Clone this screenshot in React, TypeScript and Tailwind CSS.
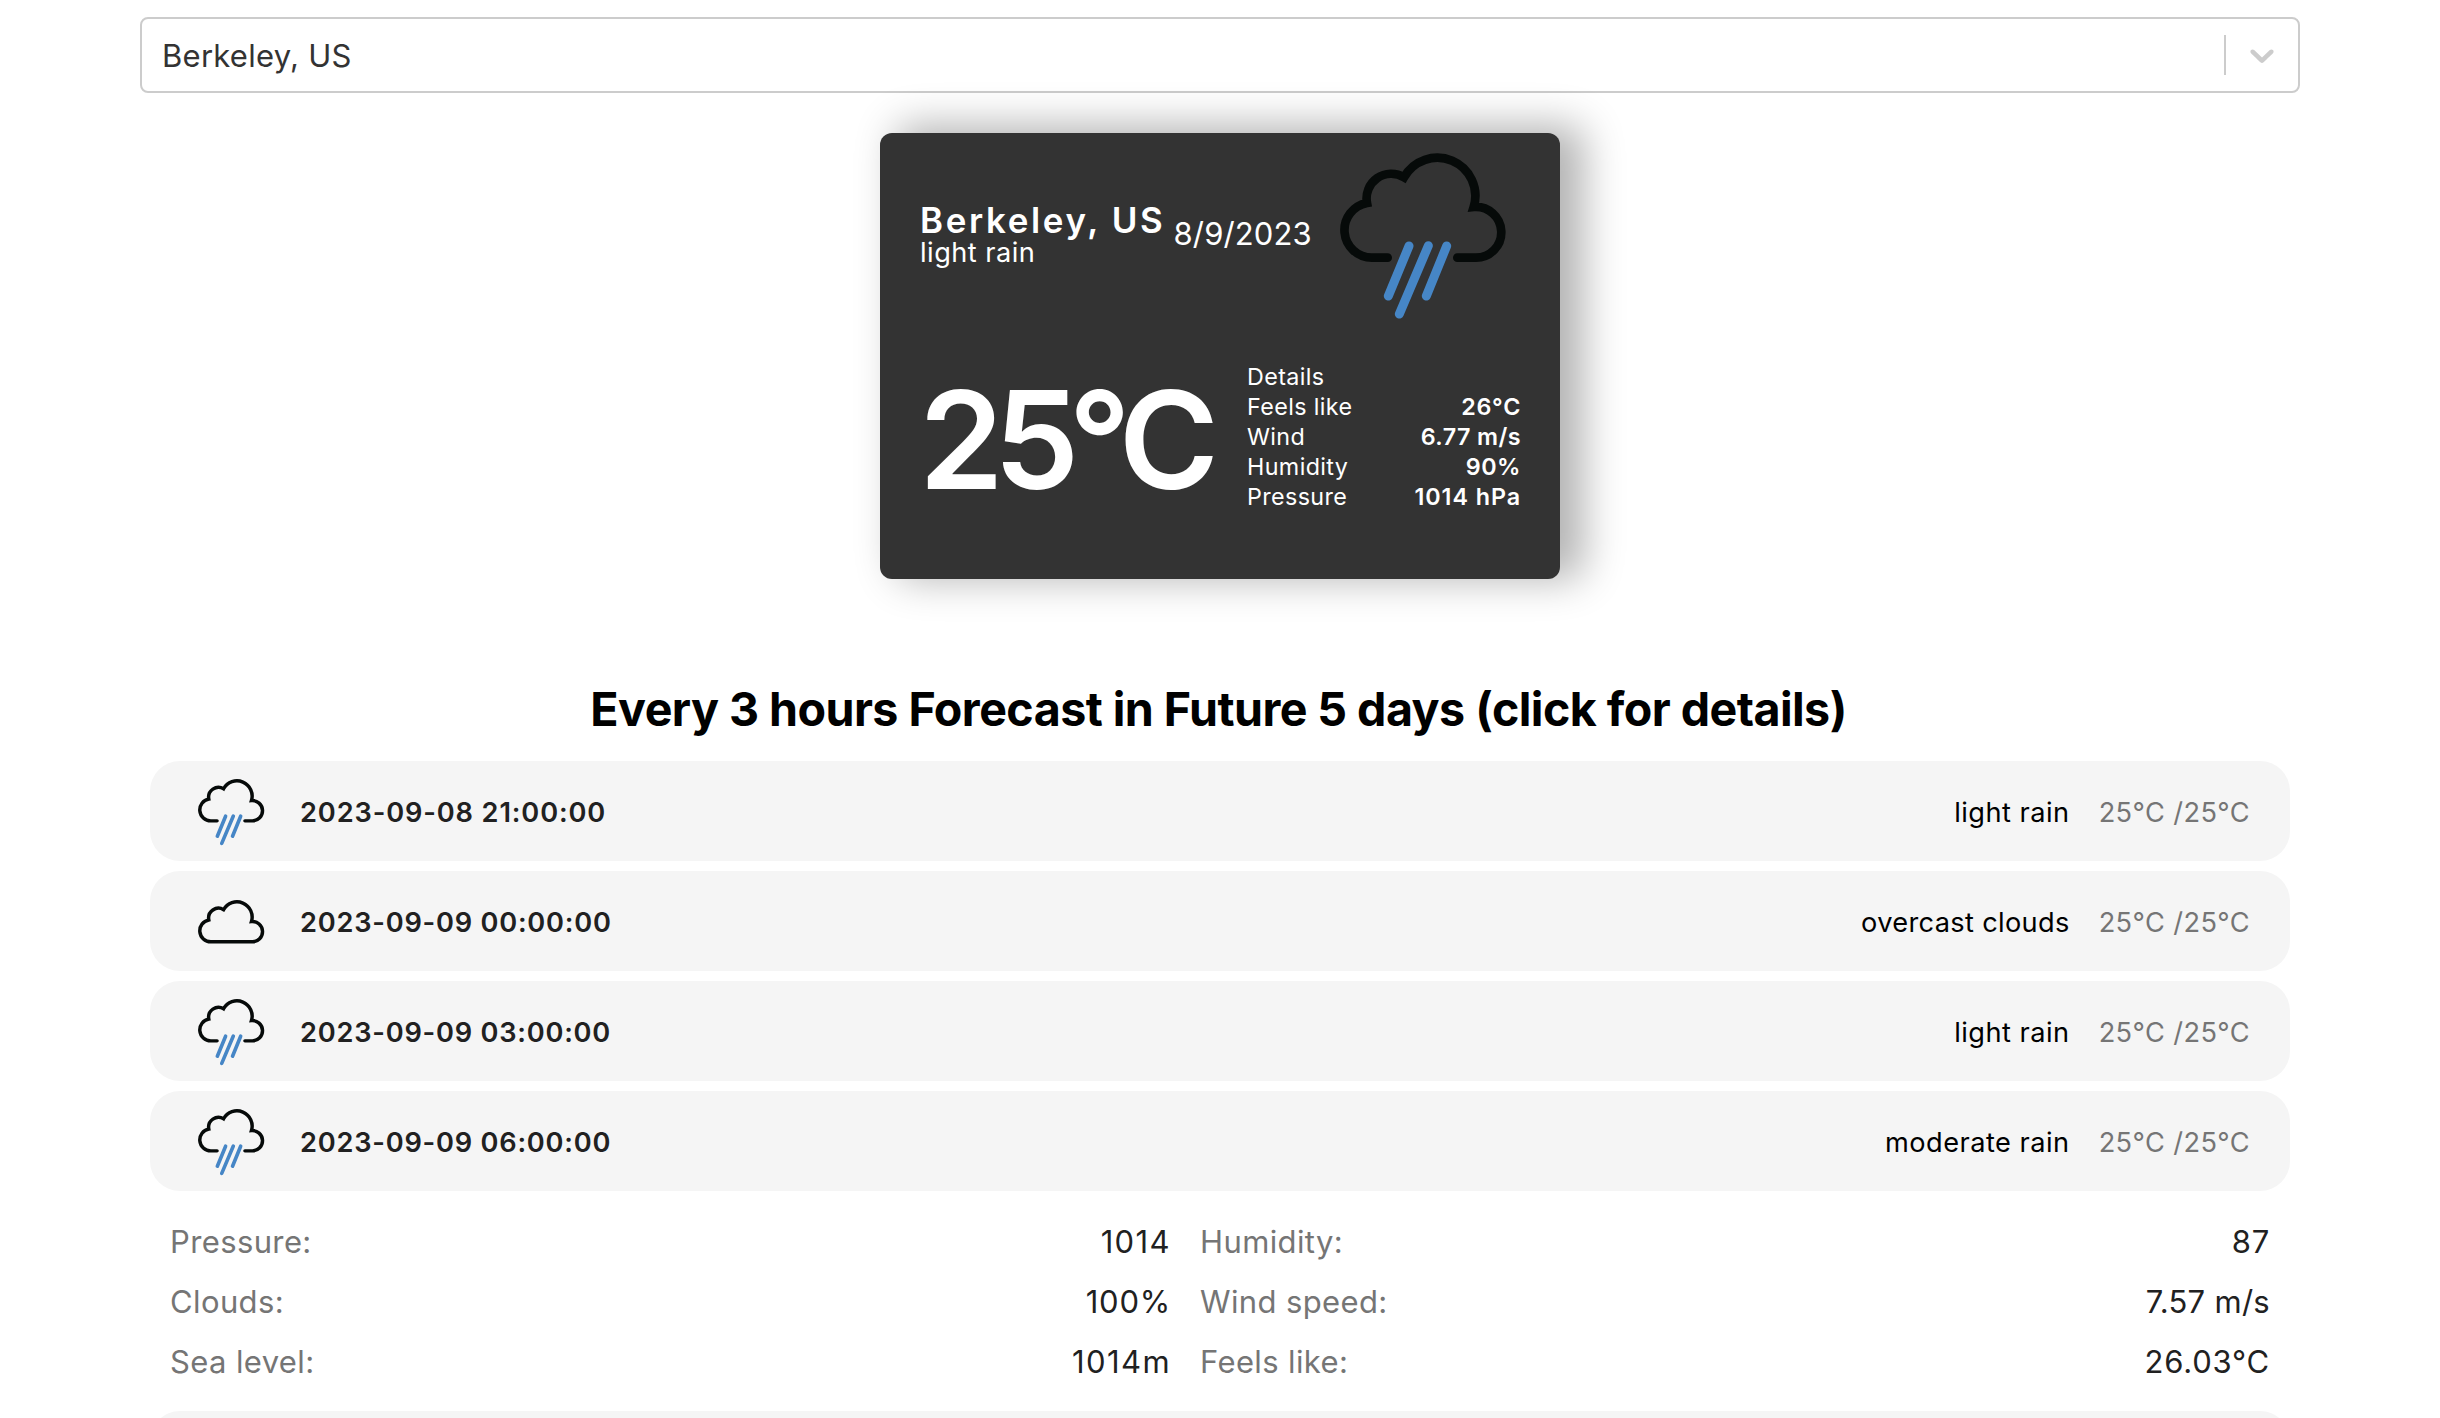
import React from "react";

type IconKind = "rain" | "cloud";

function WeatherIcon({ kind, className }: { kind: IconKind; className: string }) {
  if (kind === "cloud") {
    return (
      <svg viewBox="0 0 600 600" className={className} fill="none">
        <path
          d="M156 456 A82.7 82.7 0 0 1 141 292 A74 74 0 0 1 252 215 A114.2 114.2 0 0 1 461 304 A76.15 76.15 0 1 1 467 456 Z"
          stroke="#060a09"
          strokeWidth={26}
        />
      </svg>
    );
  }
  return (
    <svg viewBox="0 0 600 600" className={className} fill="none" strokeLinecap="round">
      <path
        d="M203 374 H156 A82.7 82.7 0 0 1 141 210 A74 74 0 0 1 252 133 A114.2 114.2 0 0 1 461 222 A76.15 76.15 0 1 1 467 374 H412"
        stroke="#060a09"
        strokeWidth={26}
      />
      <path d="M267 339 L205 489 M325 338 L238 543 M380 339 L319 489" stroke="#4686c6" strokeWidth={27} />
    </svg>
  );
}

function CitySelect() {
  return (
    <div className="flex h-[76px] items-center rounded-lg border-2 border-[#cccccc] bg-white">
      <div className="flex-1 pt-0.5 pl-5 text-[31px] tracking-[0.26px] text-[#333333]">Berkeley, US</div>
      <div className="h-10 w-0.5 bg-[#cccccc]" />
      <div className="p-4">
        <svg viewBox="0 0 20 20" className="size-10" fill="#cccccc">
          <path d="M4.516 7.548c0.436-0.446 1.043-0.481 1.576 0l3.908 3.747 3.908-3.747c0.533-0.481 1.141-0.446 1.574 0 0.436 0.445 0.408 1.197 0 1.615-0.406 0.418-4.695 4.502-4.695 4.502-0.217 0.223-0.502 0.335-0.787 0.335s-0.57-0.112-0.789-0.335c0 0-4.287-4.084-4.695-4.502s-0.436-1.17 0-1.615z" />
        </svg>
      </div>
    </div>
  );
}

const parameters = [
  { label: "Feels like", value: "26°C", tracking: "tracking-[0.7px]" },
  { label: "Wind", value: "6.77 m/s", tracking: "tracking-[0.43px]" },
  { label: "Humidity", value: "90%", tracking: "tracking-[0.5px]" },
  { label: "Pressure", value: "1014 hPa", tracking: "tracking-[0.95px]" },
];

function CurrentWeather() {
  return (
    <section className="mx-auto mt-10 h-[446px] w-[680px] rounded-xl bg-[#333333] px-10 text-white shadow-[20px_-4px_40px_4px_rgb(0_0_0/0.3)]">
      <div className="flex h-[200px] items-center justify-between">
        <div className="pt-[3px]">
          <p className="text-[34.9px] leading-9 font-semibold tracking-[2.65px]">Berkeley, US</p>
          <p className="text-[27.2px] leading-[29px] tracking-[0.48px]">light rain</p>
        </div>
        <div className="pt-0.5 text-[31px] tracking-[0.12px]">8/9/2023</div>
        <WeatherIcon kind="rain" className="size-[200px]" />
      </div>
      <div className="flex h-[206px] items-center justify-between">
        <p className="-ml-px pt-2 text-[136px] leading-[166px] font-semibold tracking-[-10.1px]">25°C</p>
        <div className="-mr-px w-[274px] pt-0.5 text-[23.3px] leading-[30px]">
          <div className="tracking-[0.38px]">Details</div>
          {parameters.map((p) => (
            <div key={p.label} className="flex justify-between">
              <span className="tracking-[0.38px]">{p.label}</span>
              <span className={`font-semibold ${p.tracking}`}>{p.value}</span>
            </div>
          ))}
        </div>
      </div>
    </section>
  );
}

const forecast: {
  time: string;
  icon: IconKind;
  description: string;
  timeTracking: string;
  tracking: string;
}[] = [
  { time: "2023-09-08 21:00:00", icon: "rain", description: "light rain", timeTracking: "tracking-[0.88px]", tracking: "tracking-[0.48px]" },
  { time: "2023-09-09 00:00:00", icon: "cloud", description: "overcast clouds", timeTracking: "tracking-[0.78px]", tracking: "tracking-[0.33px]" },
  { time: "2023-09-09 03:00:00", icon: "rain", description: "light rain", timeTracking: "tracking-[0.78px]", tracking: "tracking-[0.48px]" },
  { time: "2023-09-09 06:00:00", icon: "rain", description: "moderate rain", timeTracking: "tracking-[0.78px]", tracking: "tracking-[0.48px]" },
];

function ForecastRow({ item }: { item: (typeof forecast)[number] }) {
  return (
    <div className="flex h-[100px] items-center rounded-[30px] bg-[#f5f5f5] px-10 text-[27.2px]">
      <WeatherIcon kind={item.icon} className="size-20" />
      <span className={`flex-1 pt-1 pl-[30px] font-semibold text-[#212121] ${item.timeTracking}`}>{item.time}</span>
      <span className={`mr-[29px] pt-1 text-black ${item.tracking}`}>{item.description}</span>
      <span className="pt-1 tracking-[0.38px] text-[#757575]">25°C /25°C</span>
    </div>
  );
}

const details = [
  { label: "Pressure:", value: "1014", tracking: "tracking-[1.39px]" },
  { label: "Humidity:", value: "87", tracking: "tracking-[0.8px]" },
  { label: "Clouds:", value: "100%", tracking: "tracking-[0.8px]" },
  { label: "Wind speed:", value: "7.57 m/s", tracking: "tracking-[0.29px]" },
  { label: "Sea level:", value: "1014m", tracking: "tracking-[1.43px]" },
  { label: "Feels like:", value: "26.03°C", tracking: "tracking-[0.8px]" },
];

export default function App() {
  return (
    <main
      className="mx-auto h-[1418px] w-[2160px] pt-[17px]"
      style={{ fontFamily: 'Inter, "Liberation Sans", sans-serif' }}
    >
      <CitySelect />
      <CurrentWeather />
      <h2 className="mt-[101px] pr-[3px] text-center text-[46.6px] leading-[58px] font-bold tracking-[-0.55px] text-black">
        Every 3 hours Forecast in Future 5 days (click for details)
      </h2>
      <div className="mt-[23px] flex flex-col gap-2.5 px-2.5">
        {forecast.map((item) => (
          <ForecastRow key={item.time} item={item} />
        ))}
      </div>
      <div className="grid h-[220px] grid-cols-[1001px_1070px] content-center gap-x-[29px] px-[30px] text-[31px] leading-[60px]">
        {details.map((d) => (
          <div key={d.label} className="-mb-px flex justify-between pt-px">
            <span className="tracking-[0.38px] text-[#757575]">{d.label}</span>
            <span className={`text-[#212121] ${d.tracking}`}>{d.value}</span>
          </div>
        ))}
      </div>
      <div className="h-[7px] overflow-hidden px-2.5">
        <div className="h-[100px] rounded-[30px] bg-[#f5f5f5]" />
      </div>
    </main>
  );
}
